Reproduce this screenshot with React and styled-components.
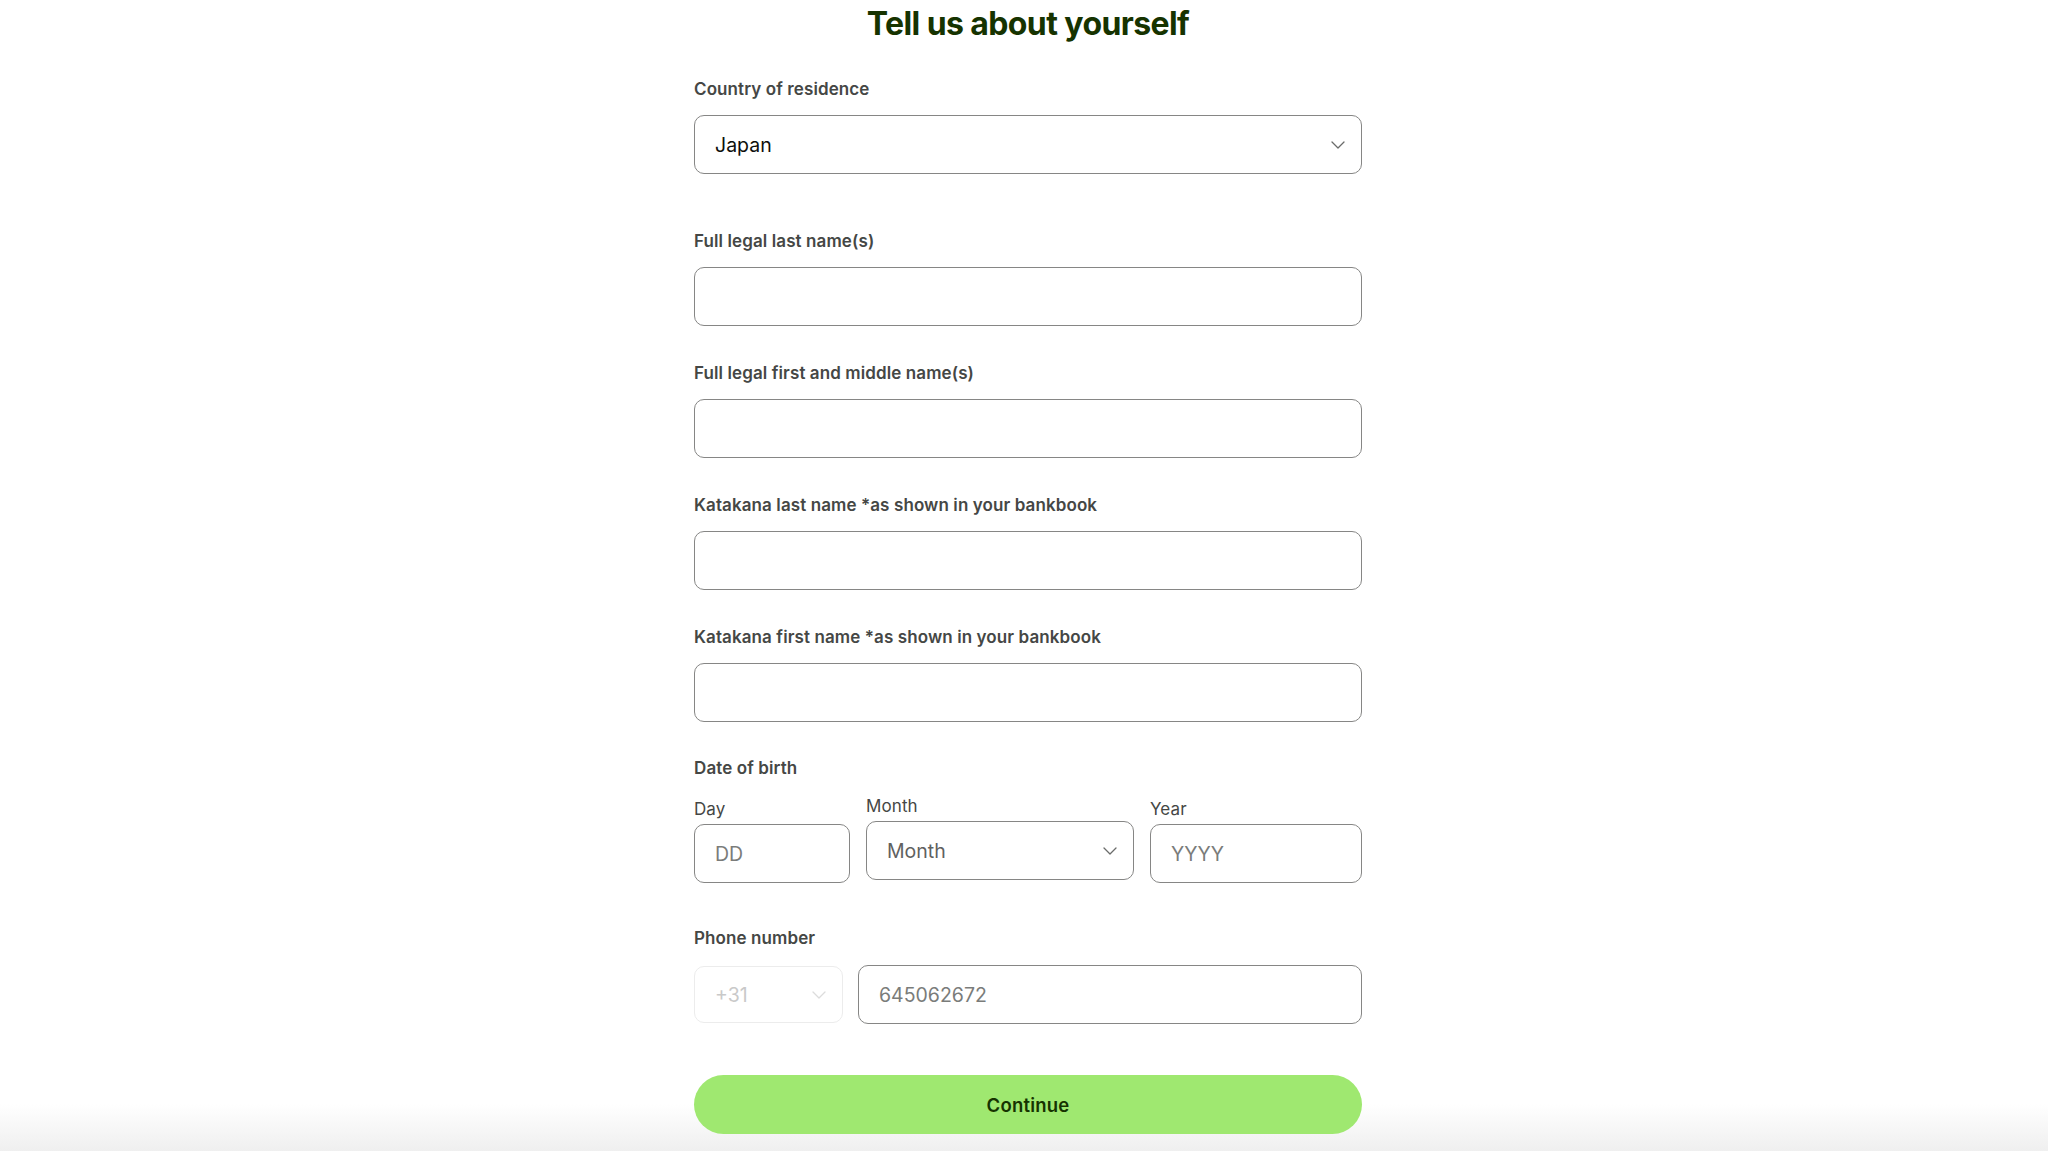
import React from "react";
import styled, { createGlobalStyle } from "styled-components";

const GlobalStyle = createGlobalStyle`
  html, body {
    margin: 0;
    padding: 0;
    background: #ffffff;
  }
  body {
    font-family: Inter, "Noto Sans", "Liberation Sans", sans-serif;
    -webkit-font-smoothing: antialiased;
  }
  * {
    box-sizing: border-box;
  }
`;

function Chevron({ light }) {
  return (
    <ChevronIcon
      width="14"
      height="8"
      viewBox="0 0 14 8"
      fill="none"
      stroke={light ? "#dcdcdc" : "#6a6c6a"}
      strokeWidth="1.3"
      strokeLinecap="round"
      strokeLinejoin="round"
    >
      <path d="M1 1l6 6 6-6" />
    </ChevronIcon>
  );
}

export default function App() {
  return (
    <Page>
      <GlobalStyle />
      <Form>
        <Title>Tell us about yourself</Title>

        <Field $gap={33}>
          <Label>Country of residence</Label>
          <SelectBox>
            <SelectValue>Japan</SelectValue>
            <Chevron />
          </SelectBox>
        </Field>

        <Field $gap={55}>
          <Label>Full legal last name(s)</Label>
          <TextInput readOnly />
        </Field>

        <Field>
          <Label>Full legal first and middle name(s)</Label>
          <TextInput readOnly />
        </Field>

        <Field>
          <Label>Katakana last name *as shown in your bankbook</Label>
          <TextInput readOnly />
        </Field>

        <Field>
          <Label>Katakana first name *as shown in your bankbook</Label>
          <TextInput readOnly />
        </Field>

        <Field $gap={34}>
          <Label>Date of birth</Label>
          <DateRow>
            <DatePart $width={156}>
              <SubLabel>Day</SubLabel>
              <TextInput readOnly placeholder="DD" />
            </DatePart>
            <DatePart $width={268} $raised>
              <SubLabel>Month</SubLabel>
              <SelectBox>
                <SelectValue $muted>Month</SelectValue>
                <Chevron />
              </SelectBox>
            </DatePart>
            <DatePart $width={212}>
              <SubLabel>Year</SubLabel>
              <TextInput readOnly placeholder="YYYY" />
            </DatePart>
          </DateRow>
        </Field>

        <Field $gap={43}>
          <Label>Phone number</Label>
          <PhoneRow>
            <CodeBox>
              <CodeText>+31</CodeText>
              <Chevron light />
            </CodeBox>
            <TextInput readOnly placeholder="645062672" />
          </PhoneRow>
        </Field>

        <ContinueButton type="button">Continue</ContinueButton>
      </Form>
    </Page>
  );
}

const Page = styled.div`
  min-height: 1151px;
  display: flex;
  justify-content: center;
  padding-left: 8px;
  background: linear-gradient(
    to bottom,
    #ffffff 0,
    #ffffff 1104px,
    #efefef 1151px
  );
`;

const Form = styled.div`
  width: 668px;
  display: flex;
  flex-direction: column;
  padding-top: 4px;
`;

const Title = styled.h1`
  margin: 0;
  font-size: 32px;
  line-height: 40px;
  font-weight: 700;
  color: #163300;
  text-align: center;
  letter-spacing: -0.6px;
`;

const Field = styled.div`
  display: flex;
  flex-direction: column;
  margin-top: ${(props) => props.$gap ?? 35}px;
`;

const Label = styled.label`
  font-size: 17px;
  line-height: 24px;
  font-weight: 600;
  letter-spacing: 0.1px;
  color: #454745;
  margin-bottom: 14px;
`;

const SubLabel = styled.span`
  font-size: 17px;
  line-height: 24px;
  font-weight: 400;
  letter-spacing: 0.1px;
  color: #454745;
  margin-bottom: 3px;
`;

const TextInput = styled.input`
  width: 100%;
  height: 59px;
  border: 1px solid #868685;
  border-radius: 10px;
  padding: 0 20px;
  font-family: inherit;
  font-size: 19.5px;
  color: #0e0f0c;
  background: #ffffff;
  outline: none;

  &::placeholder {
    color: #7a7c7a;
  }
`;

const SelectBox = styled.div`
  height: 59px;
  border: 1px solid #868685;
  border-radius: 10px;
  padding: 0 16px 0 20px;
  display: flex;
  align-items: center;
  justify-content: space-between;
  background: #ffffff;
`;

const SelectValue = styled.span`
  font-size: 19.5px;
  color: ${(props) => (props.$muted ? "#5f615f" : "#0e0f0c")};
`;

const ChevronIcon = styled.svg`
  flex-shrink: 0;
  display: block;
`;

const DateRow = styled.div`
  display: flex;
  gap: 16px;
  margin-top: 3px;
`;

const DatePart = styled.div`
  width: ${(props) => props.$width}px;
  display: flex;
  flex-direction: column;
  margin-top: ${(props) => (props.$raised ? "-3px" : "0")};
`;

const PhoneRow = styled.div`
  display: flex;
  gap: 15px;
  align-items: center;
  margin-top: 1px;
`;

const CodeBox = styled.div`
  width: 149px;
  flex-shrink: 0;
  height: 57px;
  border: 1px solid #ececec;
  border-radius: 10px;
  padding: 0 16px 0 20px;
  display: flex;
  align-items: center;
  justify-content: space-between;
`;

const CodeText = styled.span`
  font-size: 19.5px;
  color: #c9c9c9;
`;

const ContinueButton = styled.button`
  margin-top: 51px;
  height: 59px;
  width: 100%;
  border: none;
  border-radius: 999px;
  background: #9fe870;
  color: #163300;
  font-family: inherit;
  font-size: 18.5px;
  font-weight: 600;
  letter-spacing: 0.2px;
  cursor: pointer;
`;
